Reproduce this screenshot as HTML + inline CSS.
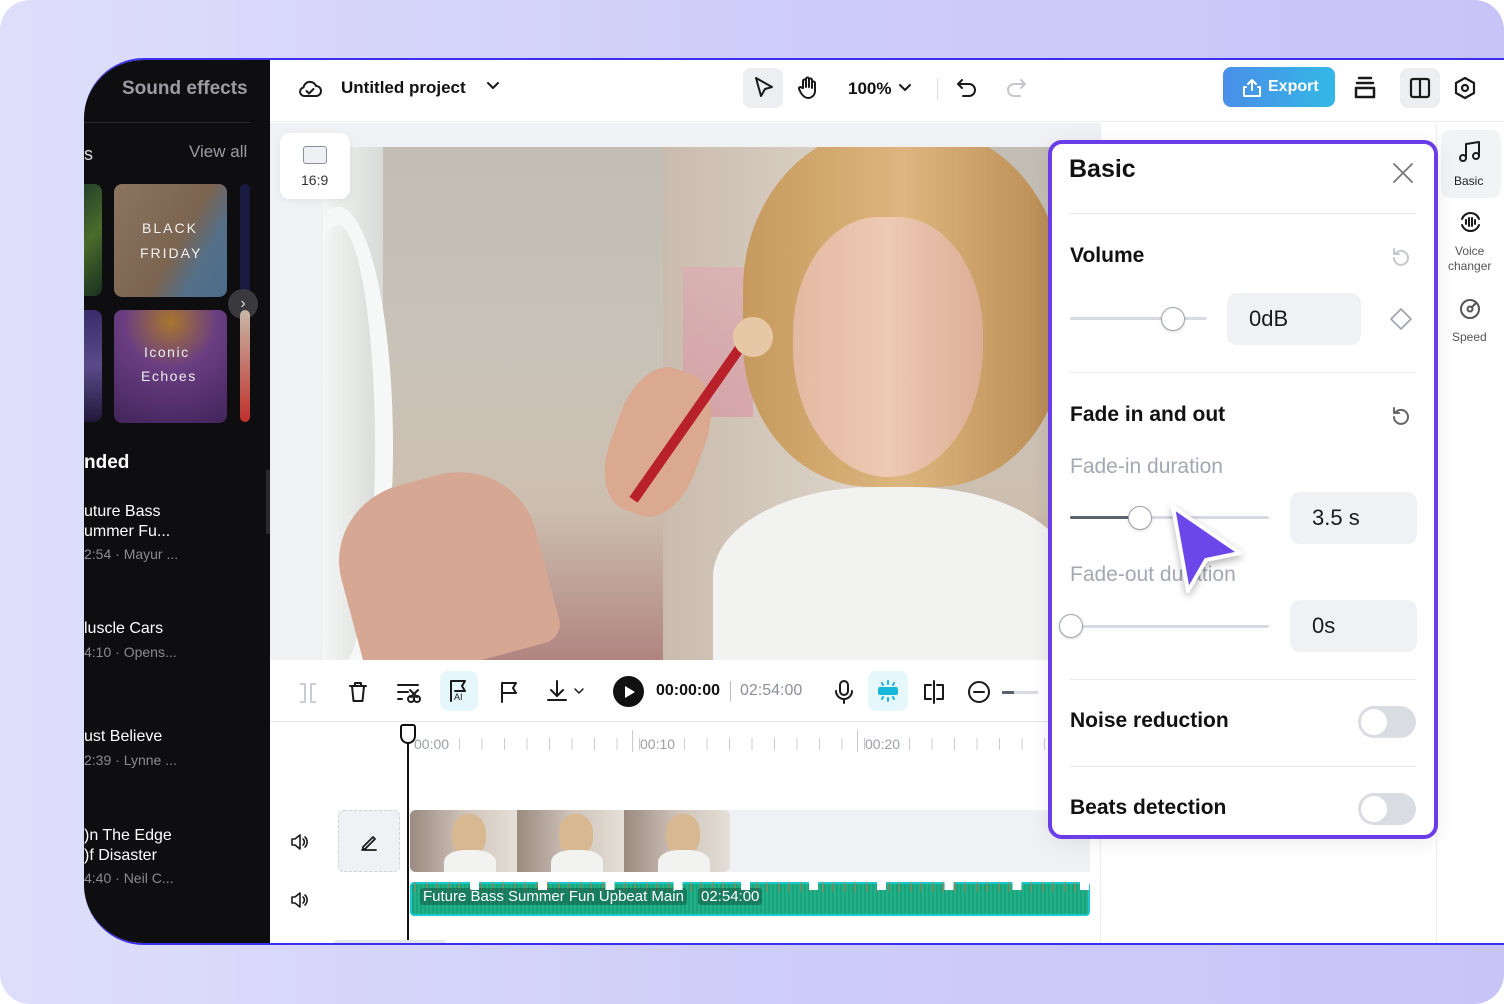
<!DOCTYPE html>
<html><head><meta charset="utf-8"><style>
*{margin:0;padding:0;box-sizing:border-box}
body{width:1504px;height:1004px;overflow:hidden;font-family:"Liberation Sans",sans-serif;background:#fff}
.bg{position:absolute;inset:0;border-radius:30px;background:linear-gradient(90deg,#dedefb 0%,#cfcdf9 50%,#c9c4f7 100%)}
.win{position:absolute;left:84px;top:58px;width:1440px;height:887px;border-top:2px solid #3d2ff0;border-bottom:2px solid #3d2ff0;border-radius:60px 0 0 60px;overflow:hidden;background:#fff}
.abs{position:absolute}
.left{left:0;top:0;width:186px;height:100%;background:#0e0e10;color:#fff}
.t{position:absolute;white-space:nowrap}
.card{position:absolute;border-radius:8px;overflow:hidden}
.top{left:186px;top:0;width:1260px;height:62px;background:#fff;border-bottom:1px solid #eceef1}
svg{position:absolute;overflow:visible}
.ic{fill:none;stroke:#1a1a1a;stroke-width:2;stroke-linecap:round;stroke-linejoin:round}
.box{position:absolute;background:#eff1f5;border-radius:10px;font-size:22px;color:#1a1a1a;padding-left:22px;display:flex;align-items:center}
.track{position:absolute;height:3px;background:#d6dbe1;border-radius:2px}
.knob{position:absolute;width:24px;height:24px;border-radius:50%;background:#fff;border:1.5px solid #9aa3ad;box-shadow:0 1px 3px rgba(0,0,0,.15)}
.sep{position:absolute;left:20px;right:20px;height:1px;background:#e8eaed}
.lbl{position:absolute;font-size:21px;font-weight:bold;color:#111}
.tog{position:absolute;width:58px;height:32px;border-radius:16px;background:#d9dde2}
.tog::after{content:"";position:absolute;left:3px;top:3px;width:26px;height:26px;border-radius:50%;background:#fff}
.thumb{position:absolute;top:0;width:107px;height:62px;overflow:hidden;background:linear-gradient(90deg,#9a8a80,#cfc2b8 50%,#e4e0d8)}
.thumb::before{content:"";position:absolute;left:42px;top:4px;width:34px;height:42px;border-radius:45%;background:#d8b890}
.thumb::after{content:"";position:absolute;left:34px;top:40px;width:52px;height:30px;border-radius:40% 40% 0 0;background:#f2f2f0}
</style></head><body>
<div class="bg"></div>
<div class="win">
 <div class="abs left">
  <div class="t" style="left:38px;top:18px;font-size:19px;font-weight:bold;color:#9c9ca2">Sound effects</div>
  <div class="abs" style="left:0;top:62px;width:166px;height:1px;background:#2a2a2e"></div>
  <div class="t" style="left:0;top:84px;font-size:18px;color:#ddd">s</div>
  <div class="t" style="left:105px;top:82px;font-size:17px;color:#9a9aa0">View all</div>
  <div class="card" style="left:-10px;top:124px;width:28px;height:112px;background:linear-gradient(135deg,#1d3b2a,#4a6b2a,#183020)"></div>
  <div class="card" style="left:30px;top:124px;width:113px;height:113px;background:linear-gradient(120deg,#8b7561 0%,#7b6450 55%,#557089 75%,#4a6c8a 100%)">
   <div class="t" style="left:28px;top:36px;font-size:14px;letter-spacing:2px;color:#f2f2f2">BLACK</div>
   <div class="t" style="left:26px;top:61px;font-size:14px;letter-spacing:2px;color:#f2f2f2">FRIDAY</div></div>
  <div class="card" style="left:156px;top:124px;width:10px;height:112px;background:#1a1a40"></div>
  <div class="abs" style="left:144px;top:229px;width:30px;height:30px;border-radius:50%;background:#3a3a3e;color:#ddd;font-size:16px;text-align:center;line-height:29px">›</div>
  <div class="card" style="left:-10px;top:250px;width:28px;height:112px;background:linear-gradient(#3a2c6a,#5a4a8a,#201838)"></div>
  <div class="card" style="left:30px;top:250px;width:113px;height:113px;background:radial-gradient(circle at 50% 10%,#a8762e 0,#6a3e82 40%,#42245a 100%)">
   <div class="t" style="left:30px;top:34px;font-size:14px;letter-spacing:1.5px;color:#eee">Iconic</div>
   <div class="t" style="left:27px;top:58px;font-size:14px;letter-spacing:1.5px;color:#eee">Echoes</div></div>
  <div class="card" style="left:156px;top:250px;width:10px;height:112px;background:linear-gradient(#c8b8a8,#c0302a)"></div>
  <div class="t" style="left:0;top:392px;font-size:19px;font-weight:bold">nded</div>
  <div class="t" style="left:0;top:442px;font-size:16px;line-height:20px">uture Bass<br>ummer Fu...</div>
  <div class="t" style="left:0;top:486px;font-size:14px;color:#8a8a90">2:54 · Mayur ...</div>
  <div class="t" style="left:0;top:560px;font-size:16px">luscle Cars</div>
  <div class="t" style="left:0;top:584px;font-size:14px;color:#8a8a90">4:10 · Opens...</div>
  <div class="t" style="left:0;top:668px;font-size:16px">ust Believe</div>
  <div class="t" style="left:0;top:692px;font-size:14px;color:#8a8a90">2:39 · Lynne ...</div>
  <div class="t" style="left:0;top:766px;font-size:16px;line-height:20px">)n The Edge<br>)f Disaster</div>
  <div class="t" style="left:0;top:810px;font-size:14px;color:#8a8a90">4:40 · Neil C...</div>
 </div>
 <div class="abs" style="left:182px;top:410px;width:12px;height:64px;background:#2a2a2e;border-radius:0 8px 8px 0"></div>
 <div class="abs top">
  <svg class="ic" style="left:28px;top:18px" width="24" height="22" viewBox="0 0 24 22"><path d="M6 18h12a5 5 0 0 0 0-10 6.5 6.5 0 0 0-12.5 1.5A4.3 4.3 0 0 0 6 18z"/><path d="M8.5 13l2.5 2.5 4.5-4.5"/></svg>
  <div class="t" style="left:71px;top:18px;font-size:17px;font-weight:bold;color:#111">Untitled project</div>
  <svg class="ic" style="left:217px;top:22px" width="12" height="8"><path d="M1 1l5 5 5-5"/></svg>
  <div class="abs" style="left:473px;top:8px;width:40px;height:40px;background:#eceef1;border-radius:8px"></div>
  <svg class="ic" style="left:484px;top:17px" width="20" height="22"><path d="M2 1l16 9-7 2-4 7z"/></svg>
  <svg class="ic" style="left:527px;top:16px" width="22" height="24"><path d="M6 12V5a1.5 1.5 0 0 1 3 0v6V3a1.5 1.5 0 0 1 3 0v8V4a1.5 1.5 0 0 1 3 0v8-5a1.5 1.5 0 0 1 3 0v8a7 7 0 0 1-7 7c-3 0-5-2-7-5l-2-4a1.5 1.5 0 0 1 2.5-1.5z"/></svg>
  <div class="t" style="left:578px;top:19px;font-size:17px;font-weight:bold;color:#111">100%</div>
  <svg class="ic" style="left:629px;top:24px" width="12" height="8"><path d="M1 1l5 5 5-5"/></svg>
  <div class="abs" style="left:667px;top:18px;width:1px;height:22px;background:#ddd"></div>
  <svg class="ic" style="left:687px;top:18px" width="20" height="20"><path d="M5 2L1 6l4 4M1 6h11a6 6 0 0 1 0 12H6"/></svg>
  <svg class="ic" style="left:736px;top:18px;stroke:#c4c8cd" width="20" height="20"><path d="M15 2l4 4-4 4M19 6H8a6 6 0 0 0 0 12h6"/></svg>
  <div class="abs" style="left:953px;top:7px;width:112px;height:40px;border-radius:8px;background:linear-gradient(90deg,#4a8ee8,#33b8e6);color:#fff;font-size:16px;font-weight:bold;line-height:40px;padding-left:45px">Export</div>
  <svg class="ic" style="left:973px;top:19px;stroke:#fff" width="18" height="18"><path d="M9 11V1M5 5l4-4 4 4M3 8H1v9h16V8h-2"/></svg>
  <svg class="ic" style="left:1084px;top:16px;stroke-width:2.5" width="22" height="24"><path d="M5 2h12M3 7h16M2 12h18v9H2z"/></svg>
  <div class="abs" style="left:1130px;top:8px;width:40px;height:40px;background:#eceef1;border-radius:8px"></div>
  <svg class="ic" style="left:1140px;top:18px;stroke-width:2.2" width="20" height="20"><rect x="1" y="1" width="18" height="18" rx="2"/><path d="M10 1v18"/></svg>
  <svg class="ic" style="left:1185px;top:17px;stroke-width:2.2" width="20" height="22"><path d="M10 1l9 5v10l-9 5-9-5V6z"/><circle cx="10" cy="11" r="3"/></svg>
 </div>
 <div class="abs" style="left:186px;top:63px;width:830px;height:537px;background:#eff1f4"></div>
 <div class="abs" style="left:1016px;top:63px;width:336px;height:825px;background:#fff;border-left:1px solid #eceef1"></div>
 <!-- video -->
 <div class="abs" style="left:239px;top:87px;width:730px;height:515px;overflow:hidden;background:linear-gradient(180deg,#c2bdb5 0%,#c8c2b8 40%,#cdbfb0 70%,#b08480 100%)">
  <div class="abs" style="left:0;top:0;width:60px;height:515px;background:linear-gradient(90deg,#f4f6f5,#d8dad8)"></div>
  <div class="abs" style="left:-40px;top:60px;width:110px;height:480px;border-radius:50%;border:18px solid #f6f8f7"></div>
  <div class="abs" style="left:340px;top:0;width:200px;height:515px;background:linear-gradient(90deg,#c9bcae,#ddd3c8)"></div>
  <div class="abs" style="left:360px;top:120px;width:70px;height:150px;background:linear-gradient(#e0a8b0,#d890a0);opacity:.6"></div>
  <div class="abs" style="left:420px;top:-20px;width:320px;height:360px;border-radius:45% 45% 40% 40%;background:linear-gradient(90deg,#c69a5e,#dcb67e 50%,#b88a52)"></div>
  <div class="abs" style="left:470px;top:70px;width:190px;height:260px;border-radius:45% 45% 50% 50%;background:linear-gradient(90deg,#e4b9a2,#eec9b3 50%,#dcae96)"></div>
  <div class="abs" style="left:390px;top:340px;width:360px;height:200px;border-radius:45% 45% 0 0;background:#f2f2f0"></div>
  <div class="abs" style="left:20px;top:330px;width:200px;height:190px;border-radius:40% 40% 10% 10%;background:#d6a894;transform:rotate(-15deg)"></div>
  <div class="abs" style="left:290px;top:220px;width:90px;height:150px;border-radius:40%;background:#dba890;transform:rotate(20deg)"></div>
  <div class="abs" style="left:360px;top:180px;width:10px;height:190px;background:#b8202a;transform:rotate(35deg)"></div>
  <div class="abs" style="left:410px;top:170px;width:40px;height:40px;border-radius:50%;background:#e6c8a6"></div>
 </div>
 <!-- 16:9 badge on top -->
 <div class="abs" style="left:196px;top:73px;width:70px;height:66px;background:#fff;border-radius:10px;box-shadow:0 2px 8px rgba(0,0,0,.06)"></div>
 <div class="abs" style="left:219px;top:86px;width:24px;height:18px;border:1.5px solid #8a9099;border-radius:3px;background:#eef0f3"></div>
 <div class="t" style="left:217px;top:112px;font-size:14px;color:#333">16:9</div>
 <!-- toolbar -->
 <div class="abs" style="left:186px;top:600px;width:830px;height:62px;background:#fff;border-bottom:1px solid #e6e8eb"></div>
 <svg class="ic" style="left:216px;top:623px;stroke:#c8cdd3" width="16" height="20"><path d="M1 1h4v18H1M15 1h-4v18h4"/></svg>
 <svg class="ic" style="left:264px;top:621px" width="20" height="22"><path d="M2 5h16M7 5V2h6v3M4 5l1.5 15h9L16 5"/></svg>
 <svg class="ic" style="left:313px;top:623px" width="24" height="20"><path d="M1 2h20M1 9h10M1 16h4"/><circle cx="14" cy="16" r="3"/><circle cx="20" cy="16" r="3"/><path d="M13 7l7 7M21 7l-7 7"/></svg>
 <div class="abs" style="left:356px;top:611px;width:38px;height:40px;border-radius:8px;background:#e5f7fb"></div>
 <svg class="ic" style="left:366px;top:620px" width="18" height="22"><path d="M1 21V1h14l-3 5 3 5H5"/><text x="4" y="20" font-size="9" font-family="Liberation Sans" fill="#1a1a1a" stroke="none">AI</text></svg>
 <svg class="ic" style="left:416px;top:621px" width="18" height="22"><path d="M2 21V2h14l-3 5 3 5H2"/></svg>
 <svg class="ic" style="left:462px;top:620px" width="22" height="22"><path d="M11 1v14M5 10l6 6 6-6M2 20h18"/></svg>
 <svg class="ic" style="left:490px;top:628px;stroke-width:1.5" width="10" height="7"><path d="M1 1l4 4 4-4"/></svg>
 <div class="abs" style="left:529px;top:616px;width:31px;height:31px;border-radius:50%;background:#111"></div>
 <svg style="left:541px;top:626px" width="10" height="12"><path d="M0 0l10 6-10 6z" fill="#fff"/></svg>
 <div class="t" style="left:572px;top:622px;font-size:16px;font-weight:bold;color:#111">00:00:00</div>
 <div class="abs" style="left:646px;top:621px;width:1px;height:20px;background:#bbb"></div>
 <div class="t" style="left:656px;top:622px;font-size:16px;color:#8a9099">02:54:00</div>
 <svg class="ic" style="left:750px;top:620px" width="20" height="24"><rect x="6" y="1" width="8" height="14" rx="4"/><path d="M2 11a8 8 0 0 0 16 0M10 19v4"/></svg>
 <div class="abs" style="left:784px;top:611px;width:40px;height:40px;border-radius:8px;background:#e5f7fb"></div>
 <svg class="ic" style="left:793px;top:620px;stroke:#1ab8d8" width="22" height="22"><rect x="2" y="8" width="18" height="6" rx="1" fill="#1ab8d8"/><path d="M11 1v3M5 3l1 2M17 3l-1 2M11 18v3M5 19l1-2M17 19l-1-2"/></svg>
 <svg class="ic" style="left:838px;top:620px" width="24" height="24"><path d="M12 1v22M9 5H3v14h6M15 5h6v14h-6"/></svg>
 <svg class="ic" style="left:884px;top:621px" width="22" height="22"><circle cx="11" cy="11" r="10"/><path d="M6 11h10"/></svg>
 <div class="abs" style="left:918px;top:631px;width:36px;height:3px;background:#d6dbe1"></div>
 <div class="abs" style="left:918px;top:631px;width:12px;height:3px;background:#5a6270"></div>
 <!-- timeline -->
 <div class="abs" style="left:186px;top:663px;width:830px;height:225px;background:#fff"></div>
 <div class="abs" style="left:330px;top:678px;width:700px;height:12px;background:repeating-linear-gradient(90deg,#c8ccd2 0 1px,transparent 1px 22.5px)"></div>
 <div class="abs" style="left:548px;top:670px;width:1px;height:22px;background:#c8ccd2"></div>
 <div class="abs" style="left:773px;top:670px;width:1px;height:22px;background:#c8ccd2"></div>
 <div class="t" style="left:330px;top:676px;font-size:14px;color:#9aa0a8;background:#fff">00:00</div>
 <div class="t" style="left:556px;top:676px;font-size:14px;color:#9aa0a8;background:#fff">00:10</div>
 <div class="t" style="left:781px;top:676px;font-size:14px;color:#9aa0a8;background:#fff">00:20</div>
 <div class="abs" style="left:254px;top:750px;width:62px;height:62px;border:1px dashed #d0d4da;border-radius:6px;background:#eff1f4"></div>
 <svg class="ic" style="left:276px;top:773px;stroke-width:1.8" width="18" height="18"><path d="M3 14L13 4l2 2L5 16H3zM2 17h14"/></svg>
 <svg class="ic" style="left:206px;top:773px;stroke-width:1.6" width="20" height="18"><path d="M2 6h3l5-4v14l-5-4H2zM13 6a4 4 0 0 1 0 6M15 4a7 7 0 0 1 0 10"/></svg>
 <svg class="ic" style="left:206px;top:831px;stroke-width:1.6" width="20" height="18"><path d="M2 6h3l5-4v14l-5-4H2zM13 6a4 4 0 0 1 0 6M15 4a7 7 0 0 1 0 10"/></svg>
 <div class="abs" style="left:326px;top:750px;width:680px;height:62px;background:#eff1f4"></div>
 <div class="abs" style="left:326px;top:750px;width:320px;height:62px;border-radius:6px;overflow:hidden">
  <div class="thumb" style="left:0"></div><div class="thumb" style="left:107px"></div><div class="thumb" style="left:214px"></div>
 </div>
 <div class="abs" style="left:326px;top:822px;width:680px;height:34px;border:2px solid #1cc8d0;border-radius:4px;background:repeating-linear-gradient(90deg,#17a57c 0 2px,#23b088 2px 4px)"></div>
 <div class="abs" style="left:326px;top:822px;width:680px;height:10px;background:repeating-linear-gradient(90deg,transparent 0 5px,#e06a3a 5px 6px,transparent 6px 11px);opacity:.7"></div>
 <div class="t" style="left:336px;top:828px;font-size:15px;color:#fff;background:rgba(20,80,60,.5);padding:0 3px;border-radius:3px">Future Bass Summer Fun Upbeat Main</div>
 <div class="t" style="left:614px;top:828px;font-size:15px;color:#fff;background:rgba(20,80,60,.5);padding:0 3px;border-radius:3px">02:54:00</div>
 <div class="abs" style="left:386px;top:816px;width:620px;height:14px;background:repeating-linear-gradient(90deg,#fff 0 9px,transparent 9px 67.8px);border-radius:2px"></div>
 <div class="abs" style="left:323px;top:680px;width:2px;height:206px;background:#111"></div>
 <div class="abs" style="left:316px;top:664px;width:16px;height:20px;border:2px solid #111;border-radius:3px 3px 8px 8px;background:#fff"></div>
 <div class="abs" style="left:250px;top:880px;width:112px;height:6px;background:#e3e6ea;border-radius:3px"></div>
 <!-- side tabs -->
 <div class="abs" style="left:1352px;top:63px;width:70px;height:825px;background:#fff;border-left:1px solid #eceef1"></div>
 <div class="abs" style="left:1357px;top:70px;width:60px;height:68px;border-radius:10px;background:#f1f3f5"></div>
 <svg class="ic" style="left:1375px;top:81px" width="22" height="22"><path d="M7 17V3l13-2v14"/><circle cx="4" cy="17" r="3"/><circle cx="17" cy="15" r="3"/></svg>
 <div class="t" style="left:1370px;top:114px;font-size:12px;color:#222">Basic</div>
 <svg class="ic" style="left:1375px;top:151px" width="22" height="22"><path d="M3 8a9 9 0 0 1 17 0M20 14a9 9 0 0 1-17 0M7 9v4M10 7v8M13 7v8M16 9v4"/></svg>
 <div class="t" style="left:1364px;top:184px;font-size:12px;color:#555;text-align:center;line-height:15px">Voice<br>changer</div>
 <svg class="ic" style="left:1376px;top:238px;stroke:#555" width="22" height="22"><circle cx="10" cy="11" r="9"/><circle cx="10" cy="11" r="2.5"/><path d="M12 9l4-4"/></svg>
 <div class="t" style="left:1368px;top:270px;font-size:12px;color:#555">Speed</div>
 <!-- Basic popover -->
 <div class="abs" style="left:964px;top:80px;width:390px;height:699px;border:4px solid #6a3de8;border-radius:14px;background:#fff;box-shadow:0 4px 20px rgba(0,0,0,.08)">
  <div class="t" style="left:17px;top:11px;font-size:25px;font-weight:bold;color:#111">Basic</div>
  <svg class="ic" style="left:341px;top:19px;stroke:#777;stroke-width:1.8" width="20" height="20"><path d="M1 1l18 18M19 1L1 19"/></svg>
  <div class="sep" style="top:69px;left:18px;right:18px"></div>
  <div class="lbl" style="left:18px;top:100px">Volume</div>
  <svg class="ic" style="left:339px;top:104px;stroke:#c5c9cf" width="20" height="20"><path d="M3 10a7 7 0 1 0 2-5M3 1v5h5"/></svg>
  <div class="track" style="left:18px;top:173px;width:137px"></div>
  <div class="knob" style="left:109px;top:163px"></div>
  <div class="box" style="left:175px;top:149px;width:134px;height:52px">0dB</div>
  <svg class="ic" style="left:338px;top:164px;stroke:#9aa2ac;stroke-width:1.6" width="22" height="22"><path d="M11 1l10 10-10 10L1 11z"/></svg>
  <div class="sep" style="top:228px;left:18px;right:18px"></div>
  <div class="lbl" style="left:18px;top:259px">Fade in and out</div>
  <svg class="ic" style="left:339px;top:263px;stroke:#666" width="20" height="20"><path d="M3 10a7 7 0 1 0 2-5M3 1v5h5"/></svg>
  <div class="t" style="left:18px;top:311px;font-size:21px;color:#a2a9b2">Fade-in duration</div>
  <div class="track" style="left:18px;top:372px;width:199px"></div>
  <div class="track" style="left:18px;top:372px;width:66px;background:#5a6270"></div>
  <div class="knob" style="left:76px;top:362px"></div>
  <div class="box" style="left:238px;top:348px;width:127px;height:52px">3.5 s</div>
  <div class="t" style="left:18px;top:419px;font-size:21px;color:#a2a9b2">Fade-out duration</div>
  <div class="track" style="left:18px;top:481px;width:199px"></div>
  <div class="knob" style="left:7px;top:470px"></div>
  <div class="box" style="left:238px;top:456px;width:127px;height:52px">0s</div>
  <div class="sep" style="top:535px;left:18px;right:18px"></div>
  <div class="lbl" style="left:18px;top:565px">Noise reduction</div>
  <div class="tog" style="left:306px;top:562px"></div>
  <div class="sep" style="top:622px;left:18px;right:18px"></div>
  <div class="lbl" style="left:18px;top:652px">Beats detection</div>
  <div class="tog" style="left:306px;top:649px"></div>
 </div>
 <svg style="left:1084px;top:443px;filter:drop-shadow(0 3px 4px rgba(0,0,0,.3))" width="72" height="92"><path d="M5 4L72 50 38 57 20 88z" fill="#6b47ea" stroke="#fff" stroke-width="4" stroke-linejoin="round"/></svg>
</div>
</body></html>
